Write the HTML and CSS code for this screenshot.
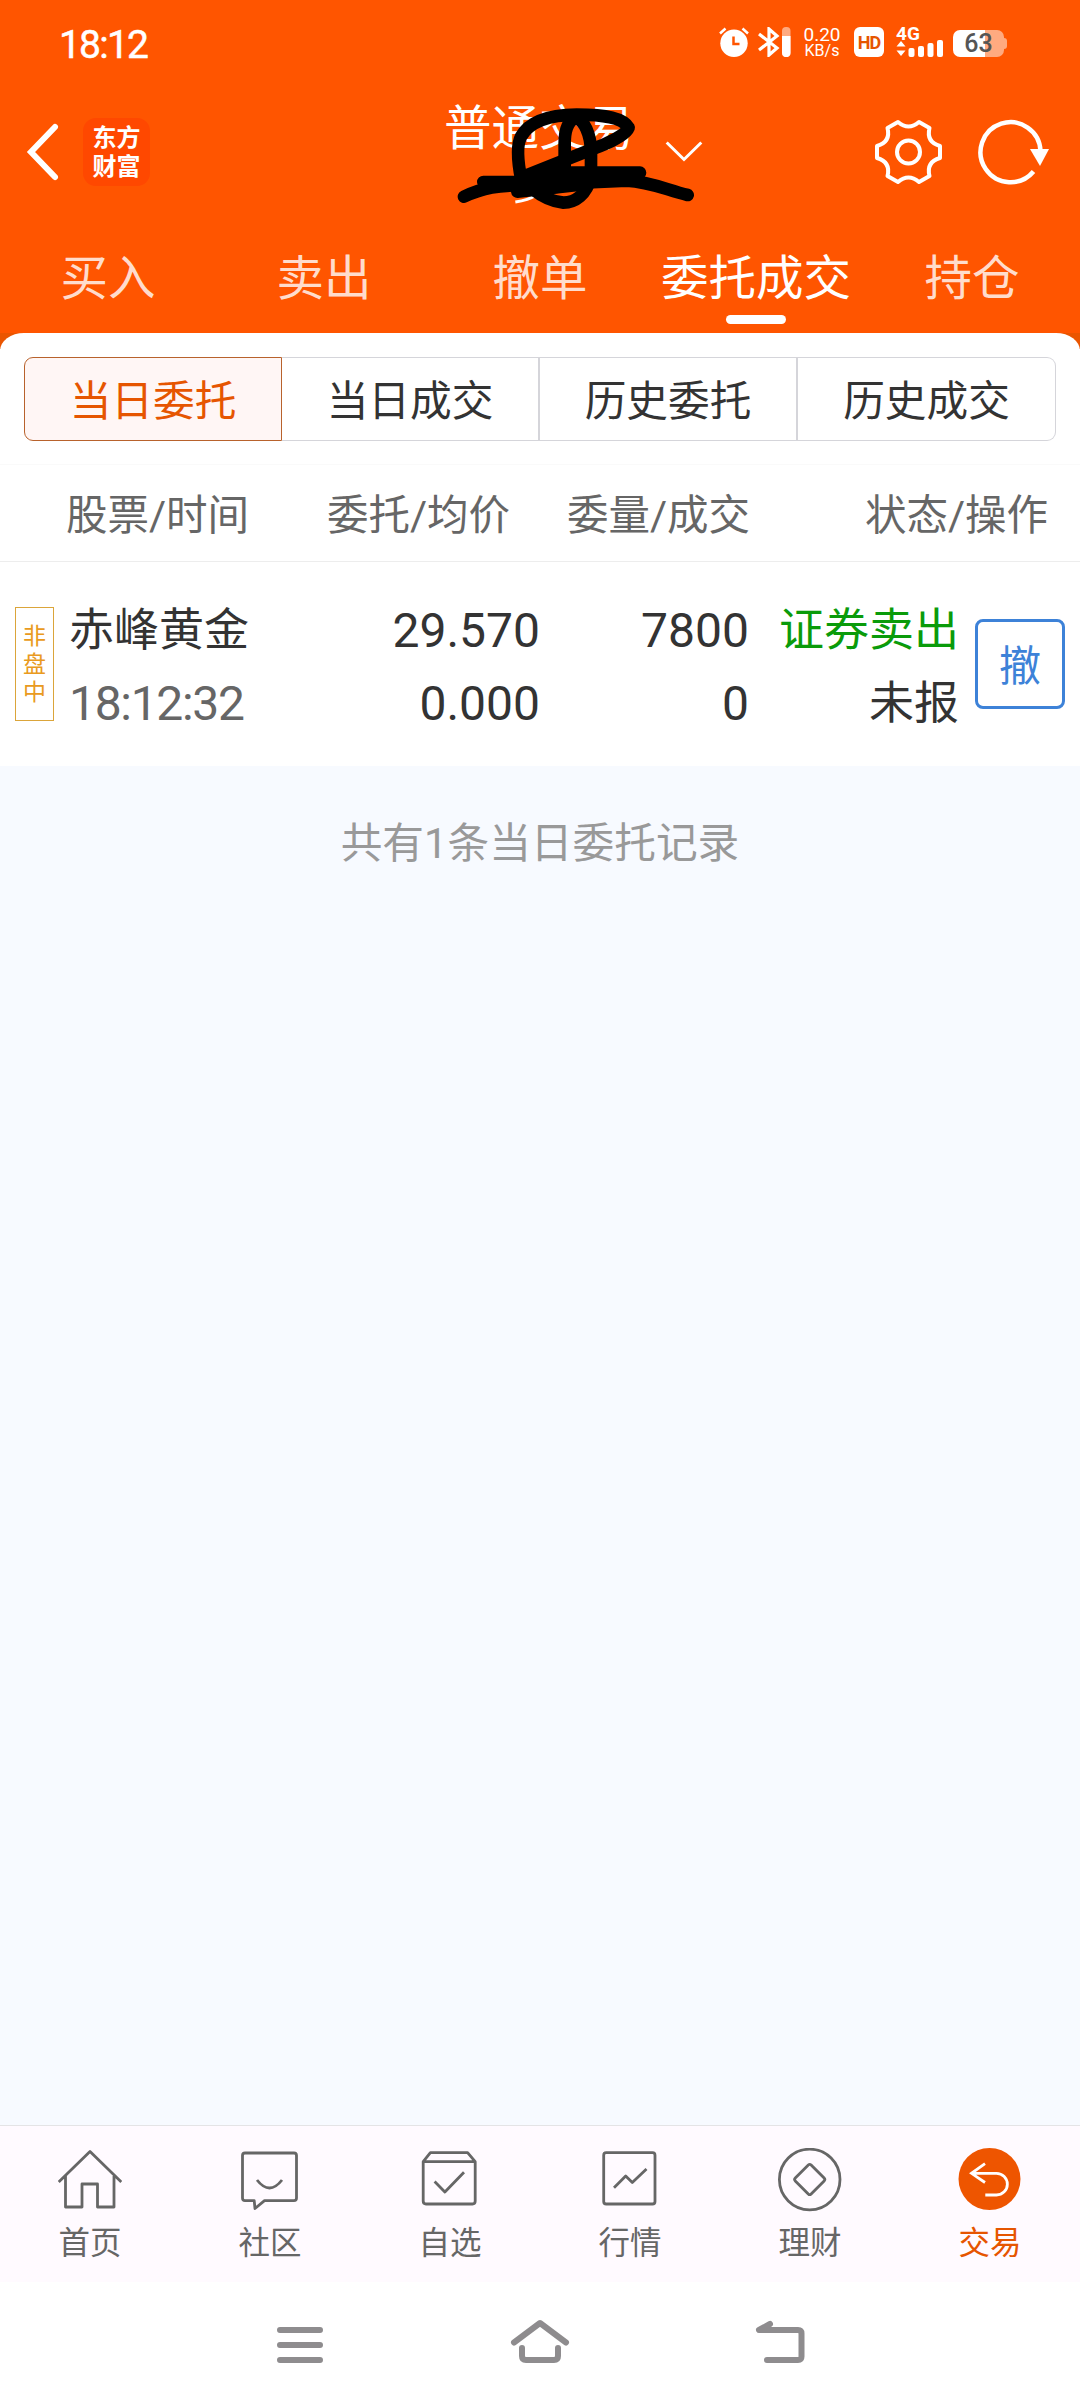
FILE: index.html
```html
<!DOCTYPE html>
<html lang="zh-CN">
<head>
    <meta charset="UTF-8">
    <meta name="viewport" content="width=device-width, initial-scale=1.0">
    <title>委托成交</title>
    <link rel="stylesheet" href="styles.css">
</head>
<body>
    <header class="header">
        <div class="status-bar">
            <span class="clock">18:12</span>
            <div class="status-icons">
                <svg class="icon-alarm" width="30" height="30" viewBox="0 0 30 30">
                    <circle cx="15" cy="16.300" r="13.700" fill="#fff"/>
                    <path d="M1 6.500L6.500 1.500M29 6.500L23.500 1.500" stroke="#fff" stroke-width="2.500"/>
                    <path d="M14.500 9.500V17H20.500" fill="none" stroke="#ff5500" stroke-width="2.500"/>
                </svg>
                <svg class="icon-bluetooth" width="33" height="30" viewBox="0 0 33 30">
                    <path d="M1 7L19 21L11 28V2L19 9L1 23" fill="none" stroke="#fff" stroke-width="3.200"/>
                    <rect x="24" y="0" width="8.500" height="30" rx="4" fill="#ffaa80"/>
                    <path d="M24 9H32.500V26A4 4 0 0 1 24 26Z" fill="#fff"/>
                </svg>
                <div class="speed">
                    <span class="speed-value">0.20</span>
                    <span class="speed-unit">KB/s</span>
                </div>
                <span class="hd">HD</span>
                <div class="signal">
                    <span class="network">4G</span>
                    <svg width="48" height="17" viewBox="0 0 48 17" fill="#fff">
                        <path d="M0.500 6.500L5 1L9.500 6.500ZM0.500 10.500L5 16L9.500 10.500Z"/>
                        <rect x="12.500" y="8" width="6" height="9" rx="2"/>
                        <rect x="22" y="6" width="6" height="11" rx="2"/>
                        <rect x="31.500" y="3" width="6" height="14" rx="2"/>
                        <rect x="41" y="0" width="6" height="17" rx="2"/>
                    </svg>
                </div>
                <div class="battery"><span>63</span></div>
            </div>
        </div>

        <div class="title-bar">
            <div class="title-left">
                <svg width="34" height="60" viewBox="0 0 34 60">
                    <path d="M29 5L5 30L29 55" fill="none" stroke="#fff" stroke-width="6" stroke-linecap="round"/>
                </svg>
                <div class="logo">东方<br>财富</div>
            </div>
            <div class="title">
                <h1>普通交易</h1>
                <svg class="scribble" width="320" height="140" viewBox="0 0 960 420">
                    <path d="M286 366Q325 360 350 345" stroke="#fff" stroke-width="9" fill="none"/>
                    <path d="M285 290L500 270V325L380 345L290 350Z"/>
                    <g fill="none" stroke="#000" stroke-width="38" stroke-linecap="round" stroke-linejoin="round">
                        <path d="M132 350C190 322 240 316 300 316L620 302C690 305 740 330 803 345"/>
                        <path d="M190 306H330L440 278H660"/>
                        <path d="M292 335L500 312"/>
                        <path d="M304 300C292 240 290 195 303 170C325 130 380 105 470 104C560 104 610 115 626 143C618 165 560 192 515 208L310 290"/>
                        <path d="M434 270V190C434 150 446 122 468 112C492 122 512 160 513 215V290C500 345 465 368 430 368C395 365 360 345 335 325"/>
                    </g>
                </svg>
            </div>
            <svg class="arrow-down" width="40" height="24" viewBox="0 0 40 24">
                <path d="M2.700 3.500L20 20.500L37.300 3.500" fill="none" stroke="#fff" stroke-width="3"/>
            </svg>
            <div class="title-right">
                <svg width="67" height="66" viewBox="0 0 67 66" fill="none" stroke="#fff" stroke-width="4" stroke-linejoin="round">
                    <path d="M23 3Q33.500 12 44 3L54.500 9Q51 23 65 27V39Q51 43 54.500 57L44 63Q33.500 54 23 63L12.500 57Q16 43 2 39V27Q16 23 12.500 9Z"/>
                    <circle cx="33.500" cy="33" r="11.500"/>
                </svg>
                <svg width="72" height="66" viewBox="0 0 72 66">
                    <path d="M55.500 52.500A30 30 0 1 1 62.500 32" fill="none" stroke="#fff" stroke-width="4.500"/>
                    <path d="M52 30H71L62 47Z" fill="#fff"/>
                </svg>
            </div>
        </div>

        <nav class="tabs">
            <a class="tab">买入</a>
            <a class="tab">卖出</a>
            <a class="tab">撤单</a>
            <a class="tab active">委托成交</a>
            <a class="tab">持仓</a>
        </nav>
    </header>

    <div class="panel-wrap">
        <main class="panel">
            <div class="segments">
                <button class="segment active" type="button">当日委托</button>
                <button class="segment" type="button">当日成交</button>
                <button class="segment" type="button">历史委托</button>
                <button class="segment" type="button">历史成交</button>
            </div>
            <div class="list-head">
                <span>股票/时间</span>
                <span>委托/均价</span>
                <span>委量/成交</span>
                <span>状态/操作</span>
            </div>
            <div class="order">
                <div class="tag">非<br>盘<br>中</div>
                <div class="cell name">
                    <span>赤峰黄金</span>
                    <span class="time">18:12:32</span>
                </div>
                <div class="cell">
                    <span>29.570</span>
                    <span>0.000</span>
                </div>
                <div class="cell">
                    <span>7800</span>
                    <span>0</span>
                </div>
                <div class="cell status">
                    <span class="sell">证券卖出</span>
                    <span>未报</span>
                </div>
                <button class="cancel" type="button">撤</button>
            </div>
        </main>
    </div>

    <p class="summary">共有1条当日委托记录</p>

    <footer class="bottom-nav">
        <a class="nav-item">
            <svg width="64" height="64" viewBox="0 0 64 64">
                <path d="M0.700 34L32 3.500L63.300 34M7.500 28V59H24V36H39.500V59H56V28"/>
            </svg>
            首页
        </a>
        <a class="nav-item">
            <svg width="64" height="64" viewBox="0 0 64 64">
                <path d="M7 5H56Q58.500 5 58.500 7.500V50Q58.500 52.700 56 52.700H26.500L17 60.500L16.200 52.700H7Q4.500 52.700 4.500 50V7.500Q4.500 5 7 5ZM19 32Q31.500 48 44 32"/>
            </svg>
            社区
        </a>
        <a class="nav-item">
            <svg width="64" height="64" viewBox="0 0 64 64">
                <path d="M5.200 13.700L12.400 4.700H49.600L57.200 13.700V53Q57.200 56 54.500 56H8Q5.200 56 5.200 53ZM5.200 13.700H57.200M16.600 33.500L26.900 44L46 24.300"/>
            </svg>
            自选
        </a>
        <a class="nav-item">
            <svg width="64" height="64" viewBox="0 0 64 64">
                <rect x="5.700" y="4.700" width="51.300" height="51.300" rx="2.500"/>
                <path d="M16 39.700L27.700 28L34.300 34.500L48.500 21"/>
            </svg>
            行情
        </a>
        <a class="nav-item">
            <svg width="64" height="64" viewBox="0 0 64 64">
                <circle cx="31.700" cy="31.500" r="30.300"/>
                <rect x="20.500" y="20.300" width="22.400" height="22.400" rx="2" transform="rotate(45 31.700 31.500)"/>
            </svg>
            理财
        </a>
        <a class="nav-item active">
            <svg width="64" height="64" viewBox="0 0 64 64">
                <circle class="disc" cx="31.500" cy="31" r="31"/>
                <path d="M27 15.700L13.500 25.300L27 34.500M14 25.300H38.500A10.800 10.800 0 0 1 38.500 47H27.300"/>
            </svg>
            交易
        </a>
    </footer>

    <div class="system-nav">
        <svg width="60" height="50" viewBox="0 0 60 50">
            <path d="M10 12H50M10 27H50M10 42H50"/>
        </svg>
        <svg width="60" height="50" viewBox="0 0 60 50">
            <path d="M4 24.500L30 5L56 24.500M12 30V38Q12 42 16 42H44Q48 42 48 38V30"/>
        </svg>
        <svg width="60" height="50" viewBox="0 0 60 50">
            <path d="M20 6L9 12H48Q51.500 12 51.500 15.500V38.500Q51.500 42 48 42H17"/>
        </svg>
    </div>
</body>
</html>
```

FILE: styles.css
```css
* {
    box-sizing: border-box;
}

body {
    margin: 0;
    width: 1080px;
    height: 2408px;
    display: flex;
    flex-direction: column;
    font-family: Roboto, 'Noto Sans CJK SC', sans-serif;
    background-color: #f7faff;
    color: #333;
    overflow: hidden;
}

svg {
    display: block;
    flex-shrink: 0;
}

button {
    font-family: inherit;
    padding: 0;
    cursor: pointer;
}

.header {
    height: 333px;
    background-color: #ff5500;
    color: #fff;
}

.status-bar {
    display: flex;
    justify-content: space-between;
    height: 87px;
    padding: 0 73px 0 59px;
}

.clock {
    font-size: 39px;
    line-height: 90px;
    letter-spacing: -1.800px;
    -webkit-text-stroke: 0.500px #fff;
}

.status-icons {
    display: flex;
    align-items: center;
    height: 84px;
}

.icon-bluetooth {
    margin-left: 9px;
}

.speed {
    display: flex;
    flex-direction: column;
    align-items: center;
    width: 40px;
    margin-left: 11px;
}

.speed-value {
    font-size: 19px;
    line-height: 17px;
}

.speed-unit {
    font-size: 16px;
    line-height: 16px;
}

.hd {
    width: 30px;
    height: 30px;
    margin-left: 12px;
    border-radius: 6px;
    background-color: #fff;
    color: #e65500;
    font-size: 18px;
    font-weight: 700;
    line-height: 31px;
    text-align: center;
    letter-spacing: -1px;
}

.signal {
    display: flex;
    flex-direction: column;
    width: 48px;
    height: 30px;
    margin-left: 12px;
}

.network {
    font-size: 19px;
    font-weight: 700;
    line-height: 13px;
}

/* charge level is 63% */
.battery {
    position: relative;
    width: 51px;
    height: 27px;
    margin: 3px 3px 0 9px;
    border-radius: 7px;
    background: linear-gradient(to right, #fff 63%, #ffaa80 63%);
    color: #555;
    font-size: 25px;
    font-weight: 500;
    line-height: 28px;
    text-align: center;
}

.battery::after {
    content: "";
    position: absolute;
    right: -3px;
    top: 8px;
    width: 3px;
    height: 11px;
    border-radius: 0 3px 3px 0;
    background-color: #ffaa80;
}

.title-bar {
    display: flex;
    height: 138px;
    padding: 0 30px 0 26px;
}

.title-left {
    display: flex;
    align-items: center;
    width: 394px;
    height: 129px;
}

.logo {
    width: 67px;
    height: 68px;
    margin-left: 23px;
    padding-top: 3px;
    border-radius: 13px;
    background-color: #ff4800;
    font-family: 'Noto Sans CJK SC', sans-serif;
    font-size: 24px;
    font-weight: 700;
    line-height: 29px;
    text-align: center;
}

.title {
    position: relative;
    width: 238px;
    padding-left: 24px;
}

.title h1 {
    margin: 0;
    font-size: 47.500px;
    font-weight: 400;
    line-height: 84px;
    white-space: nowrap;
}

.scribble {
    position: absolute;
    left: 0;
    top: -7px;
}

.arrow-down {
    margin: 52px 0 0 6px;
}

.title-right {
    display: flex;
    align-items: center;
    gap: 36px;
    height: 129px;
    margin-left: auto;
}

.tabs {
    display: grid;
    grid-template-columns: repeat(5, 1fr);
    height: 108px;
}

.tab {
    display: flex;
    flex-direction: column;
    align-items: center;
    color: #ffdccc;
    font-size: 47.500px;
    line-height: 109px;
}

.tab.active {
    color: #fff;
}

.tab.active::after {
    content: "";
    width: 60px;
    height: 9px;
    margin-top: -19px;
    border-radius: 5px;
    background-color: #fff;
}

.panel-wrap {
    background: linear-gradient(#ea5500 16px, #fff 16px);
}

.panel {
    height: 433px;
    padding-top: 24px;
    border-radius: 24px 24px 0 0 / 18px 18px 0 0;
    background-color: #fff;
}

.segments {
    display: grid;
    grid-template-columns: repeat(4, 1fr);
    height: 84px;
    margin: 0 24px;
}

.segment {
    padding-bottom: 3px;
    border: 1px solid #d5d5da;
    border-left-width: 0;
    border-right-width: 2px;
    background-color: #fff;
    color: #333;
    font-size: 41.700px;
}

.segment:last-child {
    border-right-width: 1px;
    border-radius: 0 9px 9px 0;
}

.segment.active {
    border: 1px solid #b8622c;
    border-radius: 9px 0 0 9px;
    background-color: #fff6f5;
    color: #e65500;
}

.list-head {
    display: grid;
    grid-template-columns: 244px 200px 240px 298px;
    height: 98px;
    margin-top: 23px;
    padding-left: 66px;
    border-top: 1px solid #fafafa;
    border-bottom: 1px solid #ededed;
    color: #666;
    font-size: 41.500px;
    line-height: 101px;
    text-align: right;
}

.list-head span:first-child {
    text-align: left;
}

.order {
    display: grid;
    grid-template-columns: 39px 250px 236px 209px 210px 106px;
    align-items: start;
    padding: 32px 0 0 15px;
}

.tag {
    height: 114px;
    margin-top: 13px;
    padding-top: 15px;
    border: 1px solid #dba53a;
    color: #e99a20;
    font-size: 23px;
    line-height: 28px;
    text-align: center;
}

.cell {
    display: flex;
    flex-direction: column;
    align-items: flex-end;
    font-size: 48px;
    line-height: 73px;
}

.cell.name {
    align-items: flex-start;
    padding-left: 15px;
    font-size: 45px;
}

.cell.name .time {
    color: #666;
    font-size: 48px;
    letter-spacing: -1.300px;
}

.cell.status {
    font-size: 45px;
}

.sell {
    color: #0a9b0a;
}

.cancel {
    width: 90px;
    height: 90px;
    margin: 25px 0 0 16px;
    padding-bottom: 3px;
    border: 3px solid #3d82d8;
    border-radius: 8px;
    background-color: #fff;
    color: #3d82d8;
    font-size: 42px;
}

.summary {
    margin: 0;
    padding-top: 48px;
    color: #999;
    font-size: 41.700px;
    line-height: 60px;
    text-align: center;
}

.bottom-nav {
    display: grid;
    grid-template-columns: repeat(6, 1fr);
    height: 157px;
    margin-top: auto;
    border-top: 1px solid #e4e4e6;
    background-color: #fffaff;
}

.nav-item {
    display: flex;
    flex-direction: column;
    align-items: center;
    padding-top: 22px;
    color: #666;
    font-size: 31.500px;
    line-height: 63px;
}

.nav-item svg {
    fill: none;
    stroke: #666;
    stroke-width: 2.800px;
    stroke-linejoin: round;
}

.nav-item.active {
    color: #e65500;
}

.nav-item.active svg {
    stroke: #fff;
    stroke-linejoin: miter;
}

.nav-item .disc {
    fill: #ee5500;
    stroke: none;
}

.system-nav {
    display: flex;
    justify-content: center;
    gap: 180px;
    height: 126px;
    padding-top: 36px;
    background-color: #fff;
}

.system-nav svg {
    fill: none;
    stroke: #8e8c8e;
    stroke-width: 6px;
    stroke-linecap: round;
    stroke-linejoin: round;
}
```
